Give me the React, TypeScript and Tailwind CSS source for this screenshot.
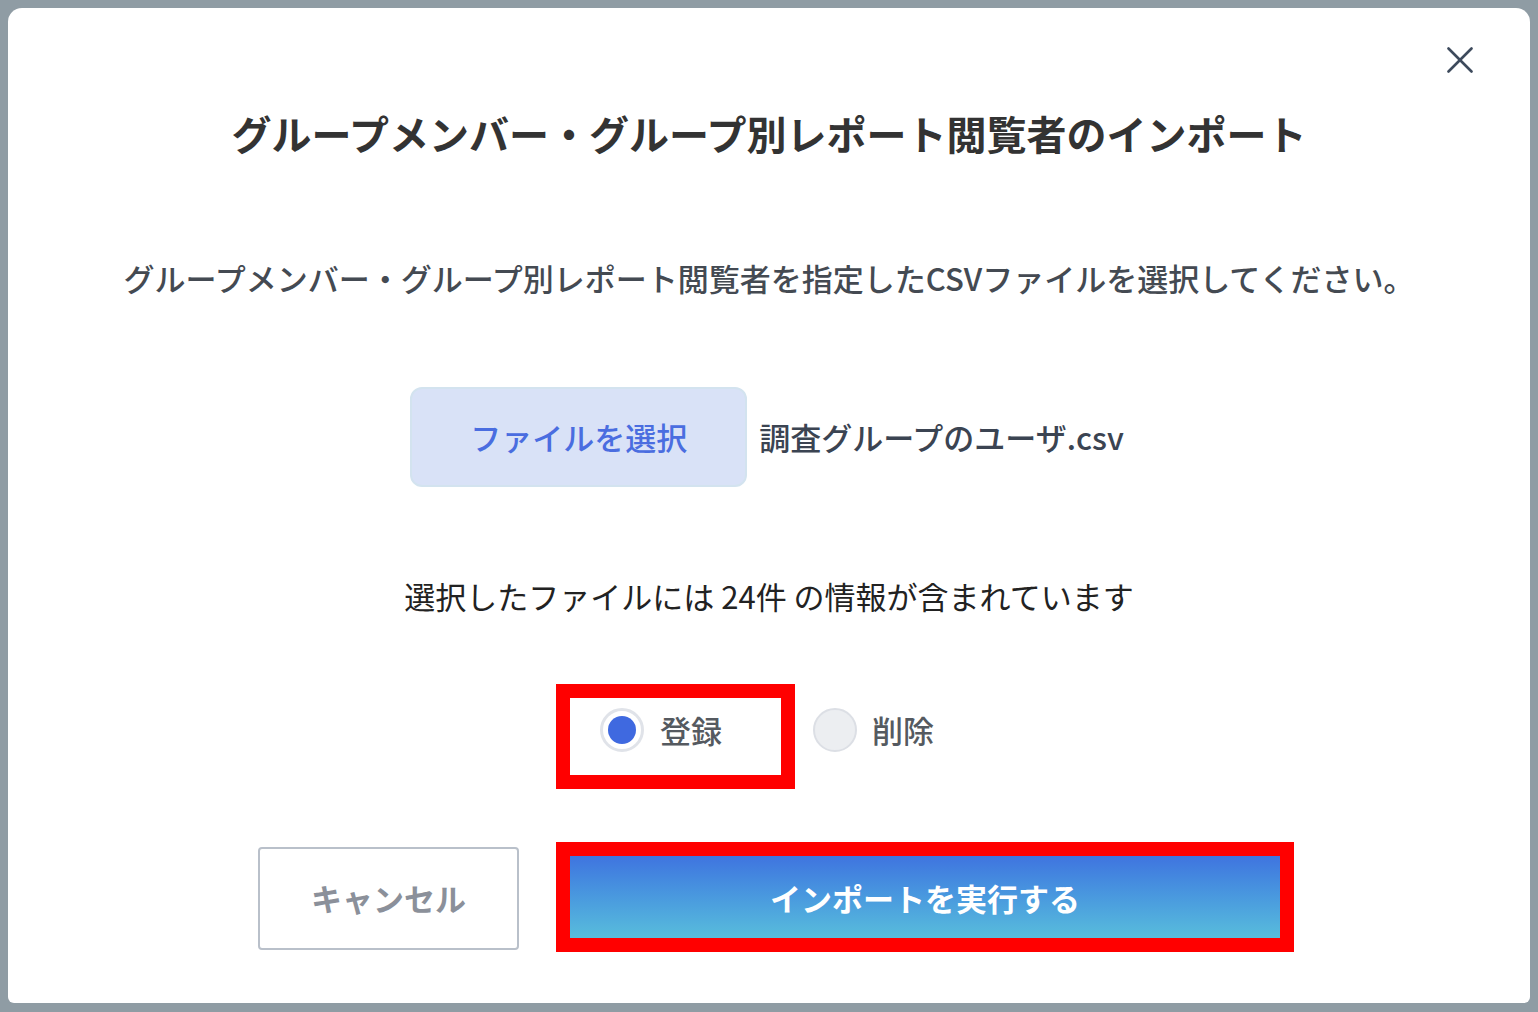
import React from "react";

export default function App() {
  return (
    <div className="w-[1538px] h-[1012px] bg-[#8f9ca4] p-[8px] font-['Noto_Sans_CJK_JP','Noto_Sans',sans-serif]">
      <div className="relative w-[1522px] h-[995px] bg-white rounded-t-[14px] rounded-b-[6px] flex flex-col items-center">
        <button className="absolute top-[39px] right-[57px] w-[26px] h-[26px]" aria-label="close">
          <svg viewBox="0 0 26 26" width="26" height="26" fill="none" stroke="#3d4a5c" strokeWidth="2.6" strokeLinecap="round">
            <line x1="1.5" y1="1.5" x2="24.5" y2="24.5" />
            <line x1="24.5" y1="1.5" x2="1.5" y2="24.5" />
          </svg>
        </button>

        <h1 className="mt-[101px] text-[40px] leading-[48px] font-bold text-[#333333] whitespace-nowrap">
          グループメンバー・グループ別レポート閲覧者のインポート
        </h1>

        <p className="mt-[101px] text-[31px] leading-[40px] font-medium text-[#444a52] whitespace-nowrap">
          グループメンバー・グループ別レポート閲覧者を指定したCSVファイルを選択してください。
        </p>

        <div className="mt-[89px] flex items-center gap-[12px] mr-[4px]">
          <button className="w-[337px] h-[100px] rounded-[12px] bg-[#d9e2f7] border-2 border-[#d3e3ef] text-[31px] font-medium text-[#4a6de0]">
            ファイルを選択
          </button>
          <span className="text-[31px] font-medium text-[#3b4452] leading-[40px] whitespace-nowrap">調査グループのユーザ.csv</span>
        </div>

        <p className="mt-[89px] text-[31px] leading-[40px] text-[#222222] whitespace-nowrap">
          選択したファイルには 24件 の情報が含まれています
        </p>

        <div className="mt-[92px] flex items-center mr-[4px]">
          <label className="relative flex items-center gap-[16px] mr-[91px]">
            <span className="w-[44px] h-[44px] rounded-full border-[3px] border-[#e0e3e9] bg-white flex items-center justify-center">
              <span className="w-[28px] h-[28px] rounded-full bg-[#3f69e0]" />
            </span>
            <span className="text-[31px] leading-[40px] font-medium text-[#555a60]">登録</span>
            <span className="pointer-events-none absolute left-[-44px] top-[-24px] w-[239px] h-[105px] border-[14px] border-[#ff0000]" />
          </label>
          <label className="flex items-center gap-[15px]">
            <span className="w-[44px] h-[44px] rounded-full border-2 border-[#dcdfe5] bg-[#eceef1]" />
            <span className="text-[31px] leading-[40px] font-medium text-[#555a60]">削除</span>
          </label>
        </div>

        <div className="mt-[95px] flex items-center gap-[51px]">
          <button className="w-[261px] h-[103px] rounded-[4px] border-2 border-[#b9c0ca] bg-white text-[31px] font-bold text-[#8b909a]">
            キャンセル
          </button>
          <div className="relative">
            <button className="w-[710px] h-[103px] bg-linear-to-b from-[#3e6bdf] to-[#5ec7da] text-[31px] font-bold text-white">
              インポートを実行する
            </button>
            <span className="pointer-events-none absolute left-[-14px] top-[-5px] w-[738px] h-[110px] border-[14px] border-[#ff0000]" />
          </div>
        </div>
      </div>
    </div>
  );
}
